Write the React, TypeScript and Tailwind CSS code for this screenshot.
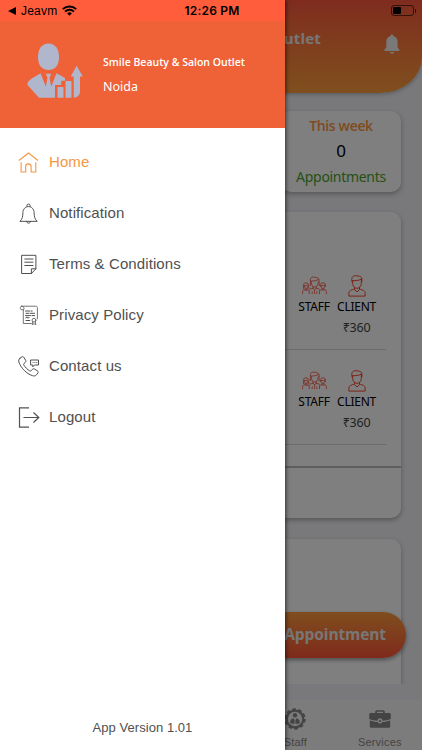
import type { ReactNode } from 'react';

const stroke = {
    fill: 'none',
    stroke: 'currentColor',
    strokeLinecap: 'round' as const,
    strokeLinejoin: 'round' as const,
};

function HomeIcon() {
    return (
        <svg width="22" height="22" viewBox="0 0 22 22" {...stroke} strokeWidth="1.1">
            <path d="M1.2 8.200 10.500 1l9.200 7.200M3.100 10.500v9.500h4.600v-5.400a2.700 2.700 0 0 1 5.400 0v5.400h4.700v-9.500" />
        </svg>
    );
}

function BellIcon() {
    return (
        <svg width="22" height="22" viewBox="0 0 22 22" {...stroke} strokeWidth="1">
            <path d="M2.2 18.1c2.2-1.9 2.6-4.6 2.700-8.500.1-3.400 2.300-6 5.600-6s5.500 2.600 5.600 6c.1 3.900.6 6.600 2.800 8.500Z" />
            <path d="M9 3.500V2.200a1.600 1.600 0 0 1 3.100 0v1.300M8.500 18.300c0 2.600 4.100 2.600 4.100 0" />
        </svg>
    );
}

function DocumentIcon() {
    return (
        <svg width="22" height="22" viewBox="0 0 22 22" {...stroke} strokeWidth="1">
            <path d="M4 1.300h13.900v13.500l-4.500 4.700H4ZM13.400 19.500v-4.700h4.500M6.800 5h8.200M6.800 8.200h8.200M6.800 11.500h8.200" />
        </svg>
    );
}

function PolicyIcon() {
    return (
        <svg width="22" height="22" viewBox="0 0 22 22" {...stroke} strokeWidth="0.8">
            <path d="M5.300 4.700v13.800h8M3.600 1.200h14c1.200 0 1.800.7 1.800 1.800v10.800M3.600 1.200c-1.700 0-1.900 3.500 0 3.500h1.700c1.200 0 1.200-3.500-1.700-3.500" />
            <path d="M7.500 6h4.200M13 6h1.200M8 8.300h3M12.300 8.300h4.200M7.500 10.600h5M14 10.600h2.500M7.800 12.800l1.200-.8.700 1 1.300-.4M8 15.500h3.800" strokeWidth="1" />
            <circle cx="16" cy="15.200" r="1.900" />
            <path d="m14.700 16.700-.5 3 1.800-1 1.800 1-.5-3" />
        </svg>
    );
}

function ContactIcon() {
    return (
        <svg width="22" height="22" viewBox="0 0 22 22" {...stroke} strokeWidth="1">
            <path d="M2 2.200 4 .8c.7-.4 1.400-.2 1.800.5l1.900 3.100c.4.700.2 1.400-.3 1.900L6 7.500c-.5.500-.5 1-.1 1.700 1.500 2.300 3.300 4.100 5.700 5.600.7.400 1.200.3 1.700-.2l1.200-1.400c.5-.5 1.200-.6 1.900-.2l3.100 1.900c.7.500.9 1.200.5 1.800l-1.500 2.100c-.9 1.100-2.300 1.500-4.200.8C8.500 17.700 3.200 12.300.9 6.200.4 4.600.8 3.200 2 2.200Z" />
            <path d="M13 4h7.500v5h-4l-1.700 1.800V9H13ZM15 6.500h.1M16.900 6.500h.1M18.700 6.500h.1" />
        </svg>
    );
}

function LogoutIcon() {
    return (
        <svg width="22" height="22" viewBox="0 0 22 22" fill="none" stroke="currentColor" strokeWidth="1.2">
            <path d="M11 .8H1.500v19.400H11M5.500 10.500h15.300M15.500 5.500l5.300 5-5.300 5" />
        </svg>
    );
}

function BusinessLogo() {
    return (
        <svg width="57" height="56" viewBox="0 0 57 56" fill="#b0b6cc">
            <path d="M21.500.500C28.300.500 32 6 32 14s-3.500 13-10.500 13S11 22 11 14 14.700.500 21.500.500Z" />
            <path d="m13.500 30.200 5.300 13.200 1.700-8.700-1.800-4h5.600l-1.800 4 1.700 8.700 5.300-13.200 8.500 4.800v2.700h-3.800v4.300h-6.200v12.800H12L.5 42c-.6-1 .4-3.300 2-4.800 2.600-2.700 7.500-4.300 11-7Z" />
            <rect x="30.500" y="44" width="6" height="10.800" rx=".6" />
            <rect x="38.500" y="38" width="6" height="16.800" rx=".6" />
            <path d="M49.600 22.700 55.800 33.500H53V48.500c0 3.400-2.700 6.200-6.300 6.200V33.500h-3Z" />
        </svg>
    );
}

function StaffIcon() {
    return (
        <svg width="25" height="20" viewBox="0 0 26 20" {...stroke} strokeWidth="0.8">
            <path d="M8.700 9.500V3.400c0-1.700 1.300-2.700 3.300-2.700 1.300 0 1.700.6 3 .6 2 0 2.800 1.200 2.800 3v5.200M9.500 4.900c3.300 0 5.500-.6 7.500-1.600M9.700 5.500c0 3.800 1.300 5.500 3.500 5.500s3.500-1.700 3.700-5.500M11.400 10.600v1.900l1.800 1.300 1.700-1.300v-1.900M8 13.300l3.400-.9M14.900 12.400l3.100.9" />
            <path d="M1.500 12.600V9.400C1.500 7.500 2.700 6.700 4.200 6.700S7 7.600 7 9.400v3.200M2.500 9.600c1.700 0 2.500-.2 3.500-.6M2.500 10.200c0 3.100 3.500 3.100 3.500 0M3.300 12.600v1.300l1 1 1-1v-1.300M.6 18v-2.300c0-1 .9-1.500 2.700-1.800M5.300 13.900l2.200.8v3.300" />
            <path d="M19 10.600V9.300c0-1.700 1-2.600 2.700-2.600s2.700.9 2.700 2.600v1.300M19.800 9.500c1.800 0 2.600-.2 3.800-.6M19.800 10c0 3.400 3.800 3.400 3.800 0M20.800 12.500v1.300l1 1 1-1v-1.300M18.200 18v-3.300l2.600-.9M22.800 13.800c2 .4 2.600.8 2.600 1.900V18M10.600 16v2M15.400 16v2M13.100 14.500V18" />
        </svg>
    );
}

function ClientIcon() {
    return (
        <svg width="18" height="22" viewBox="0 0 18 22" {...stroke} strokeWidth="1">
            <path d="M4.200 7.200C2.700 2.700 4.700.7 7.800.7c1 0 1.600.4 2.700.4 2.900 0 4.100 2.500 3.200 6.100M4.500 5.700c3 .1 6.800-.3 8.800-1.500M4.700 5.700v2.700c0 3 2 4.900 4.300 4.900s4.300-1.900 4.300-4.900V4.200M6.500 12.600v2L9 17l2.500-2.400v-2" />
            <path d="M6.500 14.200c-3.800.8-5.600 1.500-5.600 4v2.900h16.200v-2.900c0-2.500-1.800-3.200-5.600-4" />
        </svg>
    );
}

function SolidBell() {
    return (
        <svg width="16" height="20" viewBox="0 0 16 20" fill="#f2f2f2">
            <path d="M6.800 2V1.300a1.100 1.100 0 0 1 2.300 0V2c2.800.6 4.500 2.900 4.500 6v5.500l1.700 2c.5.600.2 1.500-.7 1.500H1.300c-.9 0-1.200-.9-.7-1.500l1.700-2V8c0-3.100 1.700-5.400 4.500-6ZM5.800 18h4.400c-.2 2-4.200 2-4.400 0Z" />
        </svg>
    );
}

function GearStaffIcon() {
    return (
        <svg width="22" height="22" viewBox="0 0 22 22">
            <circle cx="11" cy="11" r="8.300" fill="none" stroke="currentColor" strokeWidth="2.200" />
            <circle cx="11" cy="11" r="9.800" fill="none" stroke="currentColor" strokeWidth="1.800" strokeDasharray="3.600 2.557" />
            <circle cx="11" cy="7.200" r="2.200" fill="currentColor" />
            <path d="M6.300 15c-.3-2.800.8-4.500 3.300-4.700l1 2v3.400c-1.500.3-3 .1-4.300-.7ZM15.700 15c.3-2.800-.8-4.500-3.300-4.700l-1 2v3.400c1.500.3 3 .1 4.300-.7Z" fill="currentColor" />
        </svg>
    );
}

function BriefcaseIcon() {
    return (
        <svg width="22" height="18" viewBox="0 0 22 18" fill="currentColor">
            <path d="M6.200 3V1.800C6.200.8 7 .2 7.800.2h6.300c.9 0 1.700.6 1.700 1.600V3h4.500c.9 0 1.500.6 1.500 1.500v4.400c-3 1.100-5.400 1.600-8.300 1.800-.2-3.300-4.800-3.300-5 0C5.400 10.500 3 10 .2 8.900V4.500C.2 3.600.8 3 1.700 3Zm1.700 0h6.200V1.700H7.900Z" />
            <path d="M.8 10.500c2.700.9 5.100 1.400 8 1.600.9 2 3.500 2 4.400 0 2.900-.2 5.300-.7 8-1.600v5.700c0 .9-.5 1.500-1.400 1.500H2.200c-.9 0-1.400-.6-1.400-1.500Z" />
            <circle cx="11" cy="11" r="1.100" />
        </svg>
    );
}

const menu: { label: string; icon: ReactNode; active?: boolean }[] = [
    { label: 'Home', icon: <HomeIcon />, active: true },
    { label: 'Notification', icon: <BellIcon /> },
    { label: 'Terms & Conditions', icon: <DocumentIcon /> },
    { label: 'Privacy Policy', icon: <PolicyIcon /> },
    { label: 'Contact us', icon: <ContactIcon /> },
    { label: 'Logout', icon: <LogoutIcon /> },
];

function BookingRow() {
    return (
        <div className="flex h-[95px] justify-end gap-[8px] border-b border-[#d8d8d8] pr-[11px] pt-[20px] font-['Noto_Sans',sans-serif] text-[12px] leading-4 tracking-[-0.25px] text-black">
            <div className="flex w-8 flex-col items-center">
                <span className="flex h-[22px] items-center text-[#f4452c]"><StaffIcon /></span>
                <span className="mt-[2px]">STAFF</span>
            </div>
            <div className="flex w-[37px] flex-col items-center">
                <span className="text-[#f4452c]"><ClientIcon /></span>
                <span className="mt-[2px]">CLIENT</span>
                <span className="mt-[5px] text-[12.500px] text-[#444]">₹360</span>
            </div>
        </div>
    );
}

function Dashboard() {
    return (
        <div className="flex h-full flex-col bg-[#f2f2f8]">
            <header className="flex h-[93px] shrink-0 justify-end rounded-br-[42px_36px] bg-gradient-to-b from-[#ff573c] to-[#ff9e3c] shadow-[0_1px_4px_rgba(0,0,0,0.3)]">
                <div className="flex h-[54px] w-full items-center justify-end self-start pr-[22px] pt-[22px]">
                    <span className="mr-[63px] whitespace-nowrap text-[15px] font-bold leading-5 tracking-[0.2px] text-[#eee]">Smile Beauty &amp; Salon Outlet</span>
                    <span className="mt-[12px]"><SolidBell /></span>
                </div>
            </header>

            <main className="flex h-[591px] shrink-0 flex-col items-end overflow-hidden pr-[21px] pt-[18px]">
                <div className="flex h-[81px] w-[120px] shrink-0 flex-col items-center rounded-[10px] bg-white pt-[5px] shadow-[0_2px_5px_rgba(0,0,0,0.3)]">
                    <span className="text-[14px] font-semibold leading-5 tracking-[-0.35px] text-[#ff9640]">This week</span>
                    <span className="mt-[3px] font-['Noto_Sans',sans-serif] text-[17px] leading-6 text-black">0</span>
                    <span className="mt-[4px] font-['Noto_Sans',sans-serif] text-[14px] leading-5 tracking-[-0.3px] text-[#4aa22c]">Appointments</span>
                </div>

                <div className="mt-[20px] h-[306px] w-[380px] shrink-0 rounded-[10px] bg-white shadow-[0_2px_5px_rgba(0,0,0,0.3)]">
                    <div className="px-[15px] pt-[43px]">
                        <BookingRow />
                        <BookingRow />
                    </div>
                    <div className="mt-[21px] border-t-2 border-[#bcbcbc]" />
                </div>

                <div className="mt-[21px] flex h-[180px] w-[380px] shrink-0 justify-end rounded-[10px] bg-white pt-[73px] shadow-[0_2px_5px_rgba(0,0,0,0.3)]">
                    <button className="-mr-[5px] h-[46px] w-[240px] rounded-full bg-gradient-to-b from-[#ff9a3c] to-[#ff5338] pr-[20px] text-right text-[15.500px] font-bold tracking-[-0.1px] text-[#eee] shadow-[0_2px_4px_rgba(0,0,0,0.4)]">
                        Book Appointment
                    </button>
                </div>
            </main>

            <nav className="mt-auto grid h-[50px] w-full grid-cols-5 bg-[#f8f8f8] font-['Liberation_Sans',sans-serif] text-[11px] tracking-[0.200px] text-[#888]">
                <div className="col-start-4 flex flex-col items-center pt-[8px]"><GearStaffIcon /><span className="mt-[4px] leading-4">Staff</span></div>
                <div className="flex flex-col items-center pt-[10px]"><BriefcaseIcon /><span className="mt-[6px] leading-4">Services</span></div>
            </nav>
        </div>
    );
}

function StatusBar() {
    return (
        <div className="absolute inset-x-0 top-0 flex h-[21px] items-center text-black">
            <div className="flex flex-1 items-center pl-[8px] font-['Liberation_Sans',sans-serif]">
                <svg width="8" height="8" viewBox="0 0 8 8"><path d="M8 0v8L0 4Z" /></svg>
                <span className="ml-[5px] text-[12px] leading-4 tracking-[0.2px]">Jeavm</span>
                <svg className="ml-[5px]" width="15" height="11" viewBox="0 0 15 11" fill="none" stroke="currentColor" strokeWidth="1.9">
                    <path d="M.8 4.200a9.500 9.500 0 0 1 13.400 0M3 6.600a6.400 6.400 0 0 1 9 0" />
                    <path d="M7.500 10.800 5.200 8.500a3.200 3.200 0 0 1 4.600 0Z" fill="currentColor" stroke="none" />
                </svg>
            </div>
            <span className="mt-px font-['Inter',sans-serif] text-[12px] font-semibold leading-4 tracking-[0.2px]">12:26 PM</span>
            <div className="flex flex-1 items-center justify-end pr-[6px]">
                <div className="h-[11px] w-[23px] rounded-[3px] border border-black/60 p-[1px]">
                    <div className="h-[7px] w-[8px] rounded-[1px] bg-black" />
                </div>
                <div className="ml-px h-[4px] w-[1.5px] rounded-r bg-black/70" />
            </div>
        </div>
    );
}

function Drawer() {
    return (
        <aside className="absolute inset-y-0 left-0 flex w-[285px] flex-col bg-white shadow-[1px_0_4px_rgba(0,0,0,0.6)]">
            <div className="h-[21px] shrink-0 bg-[#ff5d3c]" />
            <div className="flex h-[107px] shrink-0 bg-[#ef6136] pl-[27px] pt-[22px] text-white">
                <BusinessLogo />
                <div className="ml-[19px] pt-[11px]">
                    <p className="whitespace-nowrap text-[10.5px] font-semibold leading-4">Smile Beauty &amp; Salon Outlet</p>
                    <p className="mt-[8px] font-['Noto_Sans',sans-serif] text-[12.5px] leading-[18px]">Noida</p>
                </div>
            </div>
            <ul className="pt-[9px] font-['Liberation_Sans',sans-serif] text-[15px] tracking-[0.1px] text-[#505050]">
                {menu.map((item) => (
                    <li key={item.label} className={`flex h-[51px] items-center gap-[9px] pl-[18px] ${item.active ? 'text-[#f39743]' : ''}`}>
                        {item.icon}
                        <span>{item.label}</span>
                    </li>
                ))}
            </ul>
            <p className="mb-[12px] mt-auto text-center font-['Liberation_Sans',sans-serif] text-[13px] leading-5 tracking-[0.05px] text-[#505050]">App Version 1.01</p>
        </aside>
    );
}

export default function App() {
    return (
        <div className="relative h-[750px] w-[422px] overflow-hidden font-['Open_Sans','Noto_Sans',sans-serif]">
            <Dashboard />
            <div className="absolute inset-0 bg-black/50" />
            <Drawer />
            <StatusBar />
        </div>
    );
}
